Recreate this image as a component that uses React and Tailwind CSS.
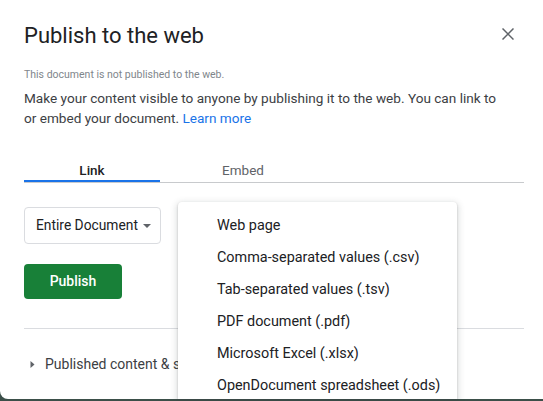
import React from "react";

const formats = [
  "Web page",
  "Comma-separated values (.csv)",
  "Tab-separated values (.tsv)",
  "PDF document (.pdf)",
  "Microsoft Excel (.xlsx)",
  "OpenDocument spreadsheet (.ods)",
];

const App = () => {
  return (
    <div
      className="w-[543px] h-[401px] bg-[#3b4f49] overflow-hidden"
      style={{ fontFamily: "Roboto, 'Liberation Sans', sans-serif" }}
    >
      <div className="relative w-[560px] h-[399px] bg-white rounded-bl-lg">
        {/* header */}
        <div className="flex items-start justify-between pl-6 pr-[46px] pt-[22px]">
          <h1 className="text-[22px] leading-7 text-[#202124]">
            Publish to the web
          </h1>
          <button className="mt-[6px] text-[#5f6368]">
            <svg width="12" height="12" viewBox="0 0 12 12">
              <path
                d="M0.5 0.5 L11.5 11.5 M11.5 0.5 L0.5 11.5"
                stroke="currentColor"
                strokeWidth="1.5"
              />
            </svg>
          </button>
        </div>

        <div className="pl-6 w-[524px]">
          <p className="mt-[17px] text-[10.5px] leading-4 text-[#80868b]">
            This document is not published to the web.
          </p>
          <p className="mt-[5px] w-[480px] text-[13.6px] leading-5 text-[#3c4043]">
            Make your content visible to anyone by publishing it to the web. You
            can link to or embed your document.{" "}
            <span className="text-[#1a73e8]">Learn more</span>
          </p>

          {/* tabs */}
          <div className="mt-[18px] flex border-b border-[#c8cacd]">
            <div className="w-[136px] h-[36px] flex items-end justify-center pb-0 text-[13.5px] leading-5 font-medium text-[#202124] border-b-2 border-[#1a73e8] -mb-px">
              Link
            </div>
            <div className="w-[166px] h-[36px] flex items-end justify-center pb-[2px] text-[13.5px] leading-5 text-[#5f6368]">
              Embed
            </div>
          </div>

          {/* select */}
          <div className="mt-[24px] w-[137px] h-[37px] flex items-center justify-between pl-[11px] pr-[9px] border border-[#dadce0] rounded text-[13.8px] text-[#202124]">
            <span>Entire Document</span>
            <svg width="8" height="4" viewBox="0 0 8 4">
              <path d="M0 0 L8 0 L4 4 Z" fill="#5f6368" />
            </svg>
          </div>

          <button className="mt-[20px] w-[98px] h-[35px] rounded bg-[#188038] text-white text-[14px] font-medium">
            Publish
          </button>

          <div className="mt-[29px] border-t border-[#dadce0] w-[500px]" />

          <div className="mt-[25px] flex items-center text-[14px] leading-5 text-[#3c4043]">
            <svg width="5" height="7" viewBox="0 0 5 7" className="ml-[6px] mr-[10px]">
              <path d="M0.5 0 L4.5 3.5 L0.5 7 Z" fill="#5f6368" />
            </svg>
            <span>Published content &amp; settings</span>
          </div>
        </div>

        {/* format menu */}
        <div className="absolute left-[178px] top-[202px] w-[279px] h-[197px] bg-white rounded-t shadow-[0_2px_6px_2px_rgba(60,64,67,0.15),0_1px_2px_rgba(60,64,67,0.3)] pt-[8px]">
          {formats.map((f) => (
            <div
              key={f}
              className="h-8 flex items-center pl-[39px] text-[14.4px] text-[#202124]"
            >
              {f}
            </div>
          ))}
        </div>
      </div>
    </div>
  );
};

export default App;
